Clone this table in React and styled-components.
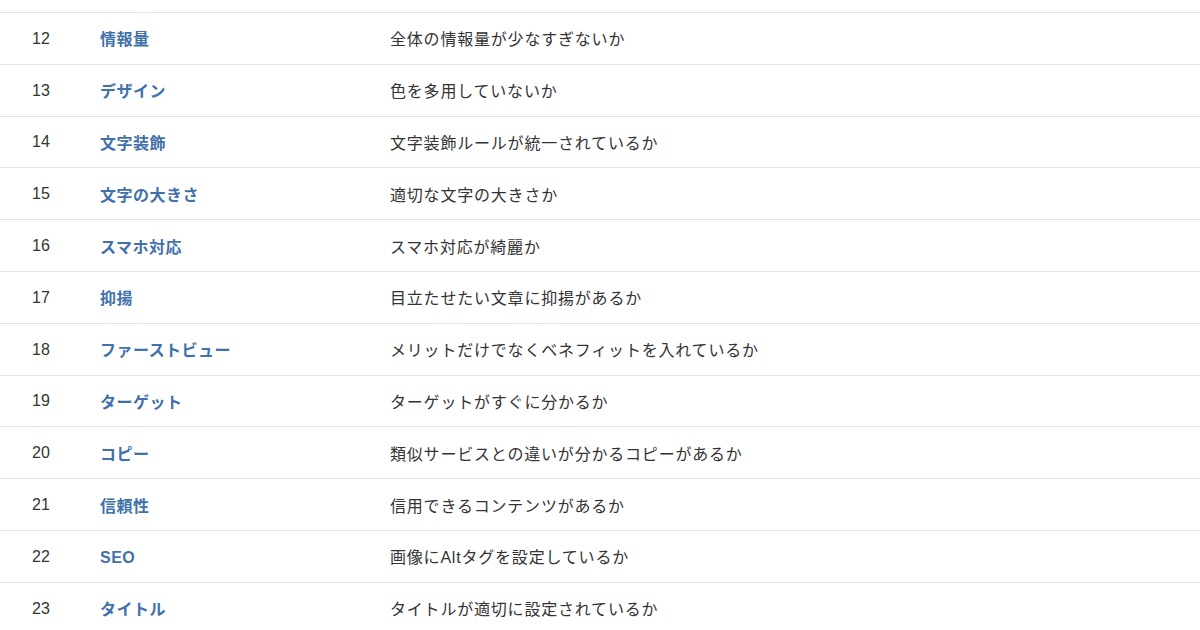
import styled, { createGlobalStyle } from 'styled-components'

const rows = [
  [12, '情報量', '全体の情報量が少なすぎないか'],
  [13, 'デザイン', '色を多用していないか'],
  [14, '文字装飾', '文字装飾ルールが統一されているか'],
  [15, '文字の大きさ', '適切な文字の大きさか'],
  [16, 'スマホ対応', 'スマホ対応が綺麗か'],
  [17, '抑揚', '目立たせたい文章に抑揚があるか'],
  [18, 'ファーストビュー', 'メリットだけでなくベネフィットを入れているか'],
  [19, 'ターゲット', 'ターゲットがすぐに分かるか'],
  [20, 'コピー', '類似サービスとの違いが分かるコピーがあるか'],
  [21, '信頼性', '信用できるコンテンツがあるか'],
  [22, 'SEO', '画像にAltタグを設定しているか'],
  [23, 'タイトル', 'タイトルが適切に設定されているか'],
]

export default function App() {
  return (
    <>
      <GlobalStyle />
      <Table>
        {rows.map(([no, title, desc]) => (
          <Row key={no}>
            <No>{no}</No>
            <Title>{title}</Title>
            <Desc>{desc}</Desc>
          </Row>
        ))}
      </Table>
    </>
  )
}

const GlobalStyle = createGlobalStyle`
  body {
    margin: 0;
    background: #fff;
    font-family: "Liberation Sans", "Noto Sans CJK JP", sans-serif;
    color: #333;
  }
`

const Table = styled.div`
  padding-top: 12px;
  display: flex;
  flex-direction: column;
`

const Row = styled.div`
  display: grid;
  grid-template-columns: 100px 290px 1fr;
  align-items: center;
  height: 51.8px;
  box-sizing: border-box;
  border-top: 1.5px solid #e2e2e2;
  font-size: 16px;
  line-height: 24px;
  font-family: "Liberation Sans", "Noto Sans CJK JP", sans-serif;
`

const No = styled.div`
  padding-left: 32px;
  padding-top: 1px;
  color: #333;
`

const Title = styled.div`
  padding-top: 4px;
  font-weight: 700;
  color: #4271a9;
  letter-spacing: 0.03em;
`

const Desc = styled.div`
  padding-top: 4px;
  color: #333;
  letter-spacing: 0.05em;
`
